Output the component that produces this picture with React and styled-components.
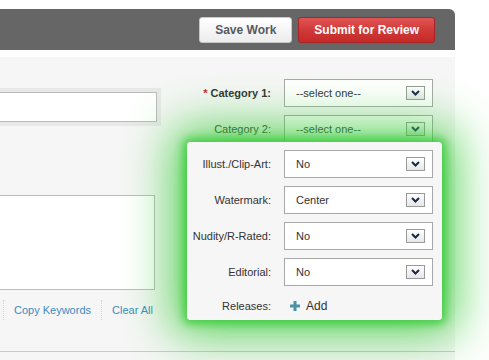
import React from "react";
import styled, { createGlobalStyle } from "styled-components";

const GlobalStyle = createGlobalStyle`
  html, body {
    margin: 0;
    padding: 0;
    background: #fff;
    overflow: hidden;
  }
  body {
    font-family: "Liberation Sans", Arial, sans-serif;
  }
  * {
    box-sizing: border-box;
  }
`;

const Page = styled.div`
  width: 455px;
  padding-top: 9px;
`;

const Header = styled.div`
  height: 41px;
  background: #666;
  border-top-right-radius: 6px;
  display: flex;
  align-items: center;
  justify-content: flex-end;
  gap: 6px;
  padding-right: 20px;
`;

const Button = styled.button`
  height: 26px;
  padding: 0 15px;
  font: bold 12px "Liberation Sans", Arial, sans-serif;
  border-radius: 3px;
  cursor: pointer;
  border: 1px solid ${(p) => (p.$primary ? "#a92424" : "#c8c8c8")};
  color: ${(p) => (p.$primary ? "#fff" : "#555a60")};
  background: ${(p) =>
    p.$primary
      ? "linear-gradient(#e05555, #d03a38 50%, #c42a28)"
      : "linear-gradient(#ffffff, #ececec)"};
`;

const Panel = styled.div`
  margin-top: 7px;
  height: 295px;
  background: #f6f6f6;
  border-bottom: 1px solid #cacaca;
  display: flex;
`;

const Footer = styled.div`
  height: 20px;
  background: #f6f6f6;
`;

const LeftColumn = styled.div`
  margin-left: -40px;
  width: 201px;
  padding-top: 31px;
  display: flex;
  flex-direction: column;
`;

const InputFrame = styled.div`
  background: #e8e8e8;
  padding: 4px;
`;

const TextInput = styled.div`
  height: 30px;
  background: #fff;
  border: 1px solid #bbb;
`;

const TextArea = styled.div`
  margin: 69px 6px 0 0;
  height: 95px;
  background: #fff;
  border: 1px solid #bbb;
`;

const LinkRow = styled.div`
  margin: 10px 6px 0 0;
  display: flex;
  justify-content: flex-end;
`;

const TextLink = styled.a`
  font-size: 11px;
  line-height: 20px;
  color: #3a8cc2;
  padding: 0 10px;
  border-left: 1px dotted #d4d4d4;
  cursor: pointer;

  &:last-child {
    padding-right: 2px;
  }
`;

const RightColumn = styled.div`
  margin-left: 10px;
  width: 284px;
  padding-top: 22px;
`;

const Row = styled.div`
  display: flex;
  align-items: center;
  height: ${(p) => (p.$short ? "24px" : "28px")};
  margin-bottom: ${(p) => (p.$last ? "0" : "8px")};
`;

const Label = styled.div`
  width: ${(p) => p.$width || 100}px;
  margin-right: 13px;
  text-align: right;
  font-size: 11px;
  font-weight: ${(p) => (p.$bold ? "bold" : "normal")};
  color: #333;
  white-space: nowrap;
`;

const Required = styled.span`
  color: #cc1f1f;
`;

const Select = styled.div`
  width: 149px;
  height: 28px;
  border: 1px solid #a8a8a8;
  background: #fff;
  display: flex;
  align-items: center;
  justify-content: space-between;
  padding: 0 7px 0 11px;
  font-size: 11px;
  color: #333;
`;

const ArrowBox = styled.div`
  width: 19px;
  height: 14px;
  border: 1px solid #9a9a9a;
  background: linear-gradient(#ffffff, #e6e6e6);
  display: flex;
  align-items: center;
  justify-content: center;
`;

const Popup = styled.div`
  position: relative;
  z-index: 1;
  margin: -1px 0 0 16px;
  width: 255px;
  background: #f6f6f6;
  border: 1px solid #fbfbfb;
  border-radius: 3px;
  padding: 7px 8px 1px 0;
  box-shadow: 0 0 8px 4px rgba(46, 200, 46, 0.75),
    0 0 48px 14px rgba(58, 204, 58, 0.85);
`;

const AddButton = styled.div`
  display: flex;
  align-items: center;
  gap: 6px;
  padding-left: 6px;
  font-size: 12px;
  color: #333;
  cursor: pointer;
`;

const Chevron = () => (
  <svg width="9" height="6" viewBox="0 0 9 6">
    <path d="M1 1 L4.5 4.5 L8 1" fill="none" stroke="#1c2a48" strokeWidth="2" />
  </svg>
);

const PlusIcon = () => (
  <svg width="10" height="10" viewBox="0 0 10 10">
    <path d="M5 0 V10 M0 5 H10" stroke="#4a93a6" strokeWidth="3" />
  </svg>
);

const Dropdown = ({ value }) => (
  <Select>
    <span>{value}</span>
    <ArrowBox>
      <Chevron />
    </ArrowBox>
  </Select>
);

const popupFields = [
  { label: "Illust./Clip-Art:", value: "No" },
  { label: "Watermark:", value: "Center" },
  { label: "Nudity/R-Rated:", value: "No" },
  { label: "Editorial:", value: "No" },
];

export default function App() {
  return (
    <>
      <GlobalStyle />
      <Page>
        <Header>
          <Button>Save Work</Button>
          <Button $primary>Submit for Review</Button>
        </Header>
        <Panel>
          <LeftColumn>
            <InputFrame>
              <TextInput />
            </InputFrame>
            <TextArea />
            <LinkRow>
              <TextLink>Copy Keywords</TextLink>
              <TextLink>Clear All</TextLink>
            </LinkRow>
          </LeftColumn>
          <RightColumn>
            <Row>
              <Label $bold>
                <Required>*</Required> Category 1:
              </Label>
              <Dropdown value="--select one--" />
            </Row>
            <Row $last>
              <Label>Category 2:</Label>
              <Dropdown value="--select one--" />
            </Row>
            <Popup>
              {popupFields.map((f) => (
                <Row key={f.label}>
                  <Label $width={83}>{f.label}</Label>
                  <Dropdown value={f.value} />
                </Row>
              ))}
              <Row $short $last>
                <Label $width={83}>Releases:</Label>
                <AddButton>
                  <PlusIcon />
                  Add
                </AddButton>
              </Row>
            </Popup>
          </RightColumn>
        </Panel>
        <Footer />
      </Page>
    </>
  );
}
